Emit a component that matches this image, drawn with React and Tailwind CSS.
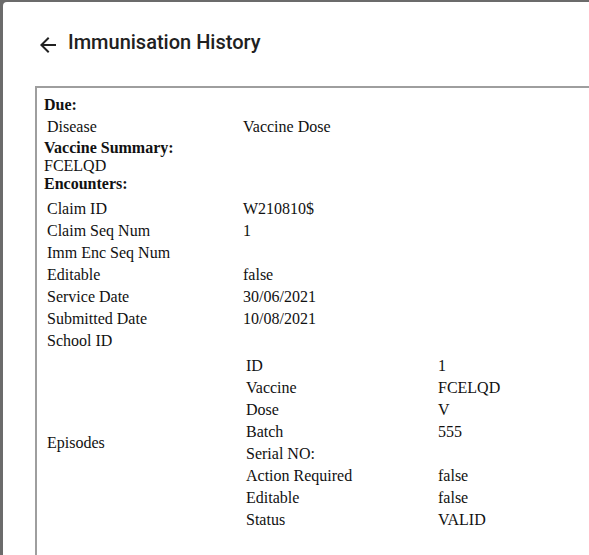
import React from 'react';

const encounter = [
  ['Claim ID', 'W210810$'],
  ['Claim Seq Num', '1'],
  ['Imm Enc Seq Num', ''],
  ['Editable', 'false'],
  ['Service Date', '30/06/2021'],
  ['Submitted Date', '10/08/2021'],
  ['School ID', ''],
];

const episode = [
  ['ID', '1'],
  ['Vaccine', 'FCELQD'],
  ['Dose', 'V'],
  ['Batch', '555'],
  ['Serial NO:', ''],
  ['Action Required', 'false'],
  ['Editable', 'false'],
  ['Status', 'VALID'],
];

function Rows({ rows }) {
  return (
    <table className="border-separate border-spacing-[2px]">
      <tbody>
        {rows.map(([k, v], i) => (
          <tr key={i}>
            <td className="p-[1px] w-[190px] align-middle">{k}</td>
            <td className="p-[1px] align-middle">{v}</td>
          </tr>
        ))}
      </tbody>
    </table>
  );
}

export default function App() {
  return (
    <div className="h-[555px] overflow-hidden bg-[#6b6b6b] pl-[3px] pt-[2px]">
      <div className="h-full bg-white rounded-tl-[4px] pt-[24px]">
        <div className="flex items-center h-[32px] pl-[33px] text-[#212121]" style={{ fontFamily: 'Roboto, sans-serif' }}>
          <svg width="24" height="24" viewBox="0 0 24 24" className="mr-[8px] mt-[6px]">
            <path d="M20 11H7.83l5.59-5.59L12 4l-8 8 8 8 1.41-1.41L7.83 13H20v-2z" fill="#212121" />
          </svg>
          <h2 className="text-[20px] font-medium">Immunisation History</h2>
        </div>

        <div
          className="ml-[32px] mt-[28px] w-[600px] h-[500px] border-2 border-[#9e9e9e] pl-[7px] pt-[8px] text-[16px] leading-[18px] text-[#111]"
          style={{ fontFamily: '"Liberation Serif", "Times New Roman", serif' }}
        >
          <div className="font-bold">Due:</div>
          <table className="border-separate border-spacing-[2px] mt-[1px]">
            <tbody>
              <tr>
                <td className="p-[1px] w-[194px]">Disease</td>
                <td className="p-[1px]">Vaccine Dose</td>
              </tr>
            </tbody>
          </table>
          <div className="font-bold">Vaccine Summary:</div>
          <div>FCELQD</div>
          <div className="font-bold">Encounters:</div>
          <table className="border-separate border-spacing-[2px] mt-[4px]">
            <tbody>
              {encounter.map(([k, v], i) => (
                <tr key={i}>
                  <td className="p-[1px] w-[194px]">{k}</td>
                  <td className="p-[1px]">{v}</td>
                </tr>
              ))}
              <tr>
                <td className="p-[1px] w-[194px] align-middle">Episodes</td>
                <td className="p-[1px]">
                  <Rows rows={episode} />
                </td>
              </tr>
            </tbody>
          </table>
        </div>
      </div>
    </div>
  );
}
